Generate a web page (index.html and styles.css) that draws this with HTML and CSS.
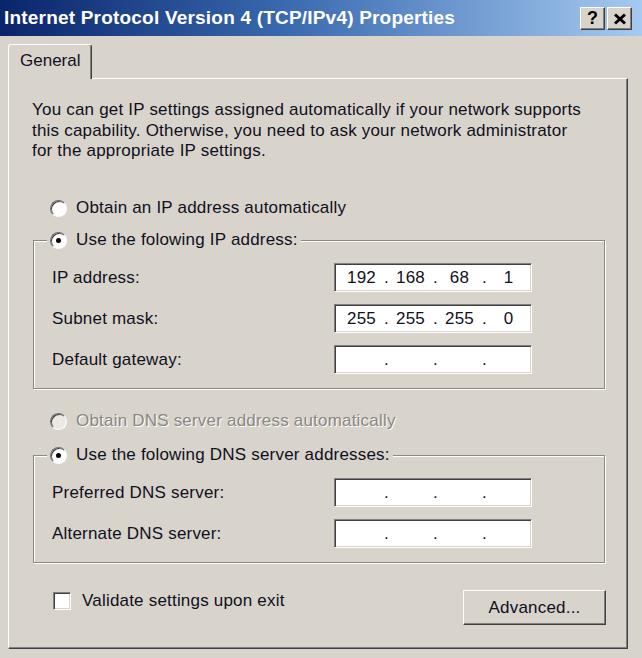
FILE: index.html
```html
<!DOCTYPE html>
<html>
<head>
<meta charset="utf-8">
<link rel="stylesheet" href="styles.css">
</head>
<body>
<div class="window">
  <header class="titlebar">
    <span class="title">Internet Protocol Version 4 (TCP/IPv4) Properties</span>
    <div class="tbtns">
      <span class="tbtn help">?</span>
      <span class="tbtn close"><svg width="14" height="12" viewBox="0 0 14 12"><path d="M2 1.5 L12 10.5 M12 1.5 L2 10.5" stroke="#000" stroke-width="3" fill="none"/></svg></span>
    </div>
  </header>
  <main class="body">
    <div class="tabs"><div class="tab">General</div></div>
    <section class="panel">
      <p class="intro">You can get IP settings assigned automatically if your network supports<br>this capability. Otherwise, you need to ask your network administrator<br>for the appropriate IP settings.</p>

      <div class="radio-row first"><span class="radio"></span><span>Obtain an IP address automatically</span></div>

      <fieldset class="group ip-group">
        <legend><span class="radio-row"><span class="radio checked"></span><span>Use the folowing IP address:</span></span></legend>
        <div class="field"><span class="flabel">IP address:</span><div class="ipbox"><span>192</span><i>.</i><span>168</span><i>.</i><span>68</span><i>.</i><span>1</span></div></div>
        <div class="field"><span class="flabel">Subnet mask:</span><div class="ipbox"><span>255</span><i>.</i><span>255</span><i>.</i><span>255</span><i>.</i><span>0</span></div></div>
        <div class="field"><span class="flabel">Default gateway:</span><div class="ipbox"><span></span><i>.</i><span></span><i>.</i><span></span><i>.</i><span></span></div></div>
      </fieldset>

      <div class="radio-row disabled dns-auto"><span class="radio"></span><span>Obtain DNS server address automatically</span></div>

      <fieldset class="group dns-group">
        <legend><span class="radio-row"><span class="radio checked"></span><span>Use the folowing DNS server addresses:</span></span></legend>
        <div class="field"><span class="flabel">Preferred DNS server:</span><div class="ipbox"><span></span><i>.</i><span></span><i>.</i><span></span><i>.</i><span></span></div></div>
        <div class="field"><span class="flabel">Alternate DNS server:</span><div class="ipbox"><span></span><i>.</i><span></span><i>.</i><span></span><i>.</i><span></span></div></div>
      </fieldset>

      <div class="footer">
        <div class="check-row"><span class="checkbox"></span><span>Validate settings upon exit</span></div>
        <button class="btn">Advanced...</button>
      </div>
    </section>
  </main>
</div>
</body>
</html>
```
FILE: styles.css
```css
html, body {
  margin: 0;
  padding: 0;
}
body {
  width: 642px;
  height: 658px;
  overflow: hidden;
  background: #d8d4cc;
  font-family: "Liberation Sans", Arial, sans-serif;
  font-size: 17px;
  letter-spacing: 0.2px;
  color: #10101c;
}
.titlebar {
  height: 36px;
  box-sizing: border-box;
  display: flex;
  align-items: center;
  justify-content: space-between;
  padding: 0 10px 0 4px;
  background: linear-gradient(to right, #0a246a 0%, #3a6ab0 45%, #a6caf0 100%);
}
.title {
  color: #fff;
  font-weight: bold;
  font-size: 19px;
  letter-spacing: 0.2px;
  white-space: nowrap;
}
.tbtns {
  display: flex;
  gap: 2px;
  margin-top: 1px;
}
.tbtn {
  width: 25px;
  height: 23px;
  box-sizing: border-box;
  background: #d8d4cc;
  border: 1px solid;
  border-color: #fff #404040 #404040 #fff;
  box-shadow: inset -1px -1px 0 #808080;
  display: flex;
  align-items: center;
  justify-content: center;
  font-weight: bold;
  font-size: 18px;
  letter-spacing: 0;
  color: #000;
}
.body {
  padding: 8px 14px 0 8px;
}
.tabs {
  display: flex;
}
.tab {
  position: relative;
  z-index: 1;
  margin-bottom: -1px;
  width: 84px;
  height: 35px;
  box-sizing: border-box;
  padding: 6px 0 0 11px;
  line-height: 20px;
  letter-spacing: 0;
  background: #d8d4cc;
  border-left: 1px solid #fff;
  border-top: 1px solid #fff;
  border-right: 1px solid #404040;
  box-shadow: inset -1px 0 0 #808080;
  border-radius: 3px 3px 0 0;
}
.panel {
  height: 571px;
  box-sizing: border-box;
  border: 1px solid;
  border-color: #fff #404040 #404040 #fff;
  box-shadow: inset -1px -1px 0 #808080;
  padding: 21px 22px 0 23px;
}
.intro {
  margin: 0;
  line-height: 20.5px;
  white-space: nowrap;
}
.radio-row {
  display: flex;
  align-items: center;
  gap: 9px;
  height: 20px;
  line-height: 20px;
  white-space: nowrap;
}
.radio-row.first {
  margin-top: 36.5px;
  padding-left: 18px;
}
.radio-row.dns-auto {
  margin-top: 22px;
  padding-left: 18px;
}
.radio {
  width: 17px;
  height: 17px;
  box-sizing: border-box;
  border-radius: 50%;
  background: #fff;
  border: 1px solid;
  border-color: #707070 #fff #fff #707070;
  box-shadow: inset 1px 1px 0 #404040;
  position: relative;
  flex: none;
}
.radio.checked::after {
  content: "";
  position: absolute;
  left: 5px;
  top: 5px;
  width: 5px;
  height: 5px;
  border-radius: 50%;
  background: #000;
}
.disabled {
  color: #8a8680;
  text-shadow: 1px 1px 0 #fff;
}
.disabled .radio {
  background: #ebe9e4;
}
.group {
  margin: 12px 0 0 1px;
  padding: 13px 0 14px 18px;
  min-width: 0;
  border: 1px solid #8c8880;
  box-shadow: 1px 1px 0 #fff, inset 1px 1px 0 #fff;
}
.dns-group {
  margin-top: 14px;
}
.group legend {
  margin-left: -5px;
  padding: 0 3px 0 3px;
  background: #d8d4cc;
  height: 20px;
}
.field {
  display: flex;
  align-items: center;
  height: 29px;
}
.field + .field {
  margin-top: 12px;
}
.flabel {
  width: 282px;
  flex: none;
}
.ipbox {
  width: 198px;
  height: 29px;
  box-sizing: border-box;
  background: #fff;
  border: 1px solid;
  border-color: #808080 #fff #fff #808080;
  box-shadow: inset 1px 1px 0 #404040, inset -1px -1px 0 #d8d4cc;
  display: grid;
  grid-template-columns: 1fr 4px 1fr 4px 1fr 4px 1fr;
  align-items: center;
  padding: 0 0 0 4px;
  line-height: 20px;
}
.ipbox span {
  text-align: center;
}
.ipbox i {
  font-style: normal;
  text-align: center;
}
.footer {
  margin-top: 27px;
  display: flex;
  justify-content: space-between;
  align-items: flex-start;
}
.check-row {
  display: flex;
  align-items: center;
  gap: 11px;
  height: 20px;
  padding-top: 1px;
  padding-left: 21px;
  white-space: nowrap;
}
.checkbox {
  width: 18px;
  height: 18px;
  box-sizing: border-box;
  background: #fff;
  border: 1px solid;
  border-color: #808080 #fff #fff #808080;
  box-shadow: inset 1px 1px 0 #404040, inset -1px -1px 0 #d8d4cc;
}
.btn {
  width: 143px;
  height: 35px;
  margin-right: -1px;
  font-family: inherit;
  font-size: 17px;
  letter-spacing: 0.2px;
  color: #10101c;
  background: #d8d4cc;
  border: 1px solid;
  border-color: #fff #404040 #404040 #fff;
  box-shadow: inset -1px -1px 0 #808080;
  padding: 0;
}
```
